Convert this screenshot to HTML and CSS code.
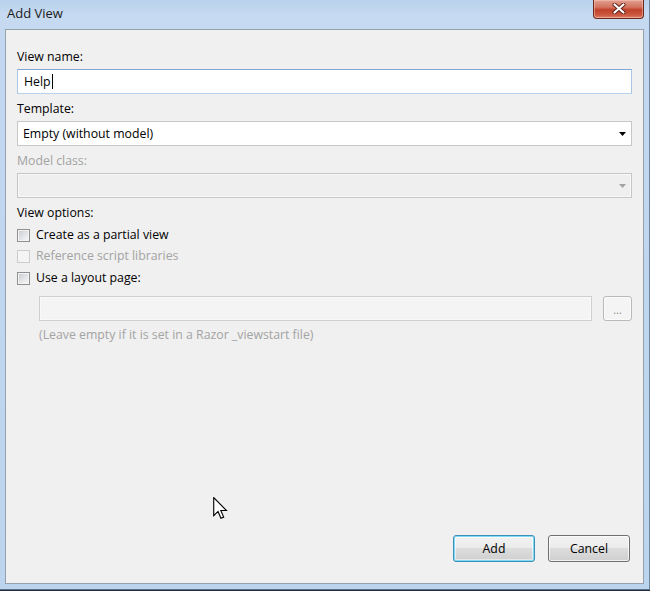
FILE: index.html
```html
<!DOCTYPE html>
<html>
<head>
<meta charset="utf-8">
<title>Add View</title>
<link rel="stylesheet" href="styles.css">
</head>
<body>
<div class="window">
  <div class="titlebar">
    <span class="title">Add View</span>
    <div class="close">
      <svg width="14" height="11" viewBox="0 0 14 11">
        <path d="M2.5 1.5 L11.5 9.5 M11.5 1.5 L2.5 9.5" stroke="#5a1e14" stroke-width="4" stroke-linecap="round"/>
        <path d="M2.5 1.5 L11.5 9.5 M11.5 1.5 L2.5 9.5" stroke="#ffffff" stroke-width="2.2" stroke-linecap="round"/>
      </svg>
    </div>
  </div>
  <div class="client">
    <div class="field">
      <div class="lbl">View name:</div>
      <div class="textbox focused"><span>Help</span><span class="caret"></span></div>
    </div>
    <div class="field">
      <div class="lbl">Template:</div>
      <div class="combo">
        <span>Empty (without model)</span>
        <svg class="arrow" width="7" height="4" viewBox="0 0 7 4"><path d="M0 0 H7 L3.5 4 Z" fill="#000"/></svg>
      </div>
    </div>
    <div class="field last">
      <div class="lbl disabled">Model class:</div>
      <div class="combo off">
        <span></span>
        <svg class="arrow" width="7" height="4" viewBox="0 0 7 4"><path d="M0 0 H7 L3.5 4 Z" fill="#a3a3a3"/></svg>
      </div>
    </div>
    <div class="lbl options">View options:</div>
    <div class="checks">
      <div class="check"><span class="cb"></span><span>Create as a partial view</span></div>
      <div class="check disabled"><span class="cb off"></span><span>Reference script libraries</span></div>
      <div class="check"><span class="cb"></span><span>Use a layout page:</span></div>
    </div>
    <div class="layout-row">
      <div class="textbox off"></div>
      <div class="browse">...</div>
    </div>
    <div class="hint">(Leave empty if it is set in a Razor _viewstart file)</div>
    <div class="buttons">
      <div class="btn default">Add</div>
      <div class="btn">Cancel</div>
    </div>
  </div>
  <svg class="cursor" width="15" height="22" viewBox="0 0 13 19.5">
    <path d="M0.5 0.5 L0.5 16.5 L4.3 12.8 L6.9 18.8 L9.3 17.8 L6.8 12 L11.8 12 Z" fill="#fff" stroke="#000" stroke-width="1" stroke-linejoin="miter"/>
  </svg>
</div>
</body>
</html>
```

FILE: styles.css
```css
html, body {
  margin: 0;
  padding: 0;
  width: 650px;
  height: 591px;
  overflow: hidden;
  background: #c3d8f0;
}

.window {
  position: relative;
  width: 650px;
  height: 591px;
  display: flex;
  flex-direction: column;
  background: linear-gradient(to bottom, #b9d1ec 0px, #c6daf1 14px, #c3d8f0 40px, #bcd4ee 100%);
  box-shadow: inset 0 -1px 0 #1f2d3d, inset 0 -2px 0 #5d7086, inset -1px 0 0 #6f86a0;
  font-family: "Open Sans", "Noto Sans", sans-serif;
  font-size: 12.3px;
  color: #000;
}

.titlebar {
  height: 29px;
  display: flex;
  align-items: flex-start;
  flex: none;
}

.title {
  padding: 5px 0 0 7px;
  font-size: 13px;
  line-height: 16px;
  color: #1a1a1a;
}

.close {
  margin-left: auto;
  margin-right: 6px;
  width: 51px;
  height: 19px;
  box-sizing: border-box;
  border: 1px solid #6b2a20;
  border-top: none;
  border-radius: 0 0 4px 4px;
  background: linear-gradient(to bottom, #e1a091 0%, #d4735f 40%, #c0402a 55%, #cc5a42 85%, #e08a70 100%);
  box-shadow: inset 0 0 0 1px rgba(255, 210, 200, 0.45);
  display: flex;
  align-items: center;
  justify-content: center;
}

.close svg {
  display: block;
  margin-top: -1px;
}

.client {
  flex: 1;
  margin: 0 6px 7px 5px;
  border: 1px solid #95a1ad;
  background: #f0f0f0;
  padding: 19px 11px 21px 11px;
  display: flex;
  flex-direction: column;
}

.lbl {
  line-height: 16px;
  height: 16px;
  white-space: nowrap;
}

.lbl.disabled {
  color: #a3a3a3;
}

.field {
  display: flex;
  flex-direction: column;
  gap: 4px;
  margin-bottom: 7px;
}

.field.last {
  margin-bottom: 7px;
}

.textbox {
  height: 25px;
  box-sizing: border-box;
  border: 1px solid #abadb3;
  background: #fff;
  display: flex;
  align-items: center;
  padding-left: 6px;
  line-height: 16px;
}

.textbox.focused {
  border-color: #7fa6d4 #a9c6e6 #b7d2ec #a9c6e6;
}

.caret {
  display: inline-block;
  width: 1px;
  height: 15px;
  background: #000;
  margin-left: 1px;
}

.textbox.off {
  flex: 1;
  background: #f4f4f4;
  border-color: #cfcfcf;
  box-shadow: inset 0 0 0 1px #f9f9f9;
}

.combo {
  height: 25px;
  box-sizing: border-box;
  border: 1px solid #c7c7c7;
  background: #fff;
  display: flex;
  align-items: center;
  padding: 0 4px 0 5px;
  line-height: 16px;
}

.combo span {
  flex: 1;
}

.combo .arrow {
  display: block;
  margin-right: 1px;
}

.combo.off {
  background: #efefef;
  border-color: #c6c6c6;
  box-shadow: inset 0 0 0 1px #f8f8f8;
}

.checks {
  margin-top: 3px;
  display: flex;
  flex-direction: column;
}

.check {
  height: 21.5px;
  display: flex;
  align-items: center;
  gap: 6px;
  line-height: 16px;
  white-space: nowrap;
}

.check.disabled {
  color: #a3a3a3;
}

.cb {
  width: 13px;
  height: 13px;
  box-sizing: border-box;
  border: 1px solid #8e8f8f;
  background: #f4f4f4;
  padding: 1px;
  flex: none;
  margin-top: 1px;
}

.cb::after {
  content: "";
  display: block;
  width: 9px;
  height: 9px;
  background: linear-gradient(135deg, #c9ced4 0%, #e3e5e8 55%, #f4f4f5 100%);
}

.cb.off {
  border-color: #cdcdcd;
}

.cb.off::after {
  background: #f4f4f4;
}

.layout-row {
  margin-top: 7.5px;
  margin-left: 22px;
  display: flex;
  gap: 11px;
  height: 25px;
}

.browse {
  width: 29px;
  height: 25px;
  box-sizing: border-box;
  border: 1px solid #b9b9b9;
  border-radius: 3px;
  background: #f4f4f4;
  box-shadow: inset 0 0 0 1px #fbfbfb;
  color: #8a8a8a;
  text-align: center;
  line-height: 25px;
  font-size: 11px;
}

.hint {
  margin-top: 6px;
  margin-left: 22px;
  line-height: 16px;
  color: #a3a3a3;
  white-space: nowrap;
}

.buttons {
  margin-top: auto;
  display: flex;
  justify-content: flex-end;
  gap: 13px;
  margin-right: 2px;
}

.btn {
  width: 82px;
  height: 27px;
  box-sizing: border-box;
  border: 1px solid #707070;
  border-radius: 3px;
  background: linear-gradient(to bottom, #f2f2f2 0%, #ebebeb 49%, #dddddd 50%, #cfcfcf 100%);
  box-shadow: inset 0 0 0 1px rgba(255, 255, 255, 0.7);
  display: flex;
  align-items: center;
  justify-content: center;
  line-height: 16px;
  color: #000;
}

.btn.default {
  border-color: #3c8fb5;
  box-shadow: inset 0 0 0 1px #7fdaf5, inset 0 0 0 2px rgba(255, 255, 255, 0.5);
}

.cursor {
  position: absolute;
  left: 213px;
  top: 497px;
}
```
